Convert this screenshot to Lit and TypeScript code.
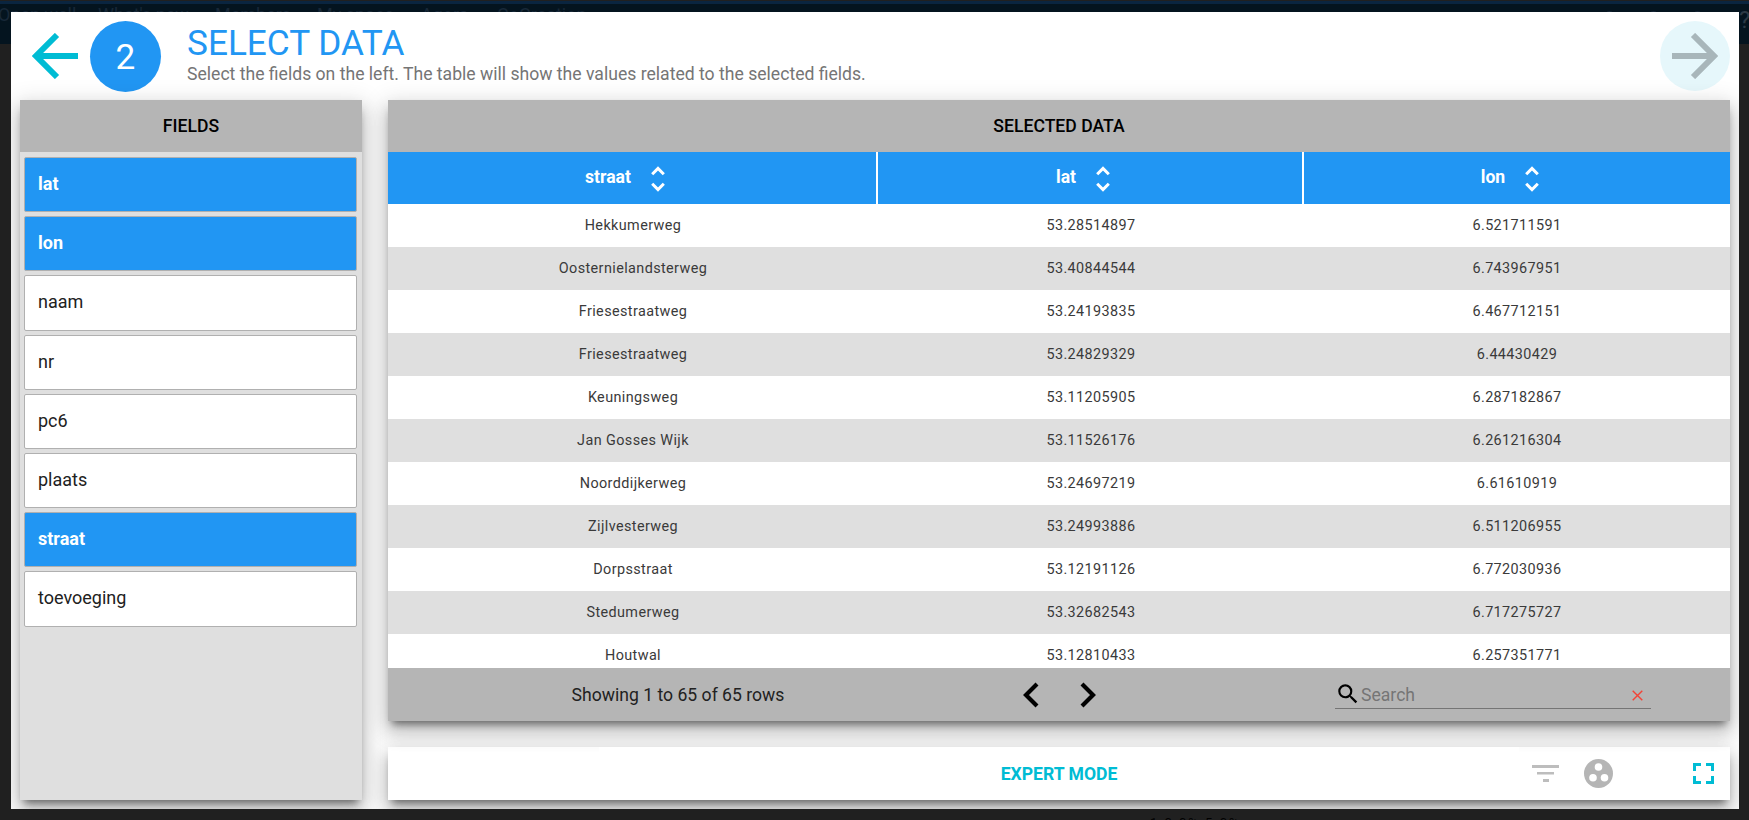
import { LitElement, html, css } from "lit";
import { customElement } from "lit/decorators.js";

const rows = [
  ["Hekkumerweg", "53.28514897", "6.521711591"],
  ["Oosternielandsterweg", "53.40844544", "6.743967951"],
  ["Friesestraatweg", "53.24193835", "6.467712151"],
  ["Friesestraatweg", "53.24829329", "6.44430429"],
  ["Keuningsweg", "53.11205905", "6.287182867"],
  ["Jan Gosses Wijk", "53.11526176", "6.261216304"],
  ["Noorddijkerweg", "53.24697219", "6.61610919"],
  ["Zijlvesterweg", "53.24993886", "6.511206955"],
  ["Dorpsstraat", "53.12191126", "6.772030936"],
  ["Stedumerweg", "53.32682543", "6.717275727"],
  ["Houtwal", "53.12810433", "6.257351771"],
];
const fields: [string, boolean][] = [
  ["lat", true], ["lon", true], ["naam", false], ["nr", false],
  ["pc6", false], ["plaats", false], ["straat", true], ["toevoeging", false],
];
const navItems = ["Open well", "What's new", "Members", "My space", "Agora", "CoCreation"];
const sortIcon = html`<svg class="sort" width="14" height="26" viewBox="0 0 14 26"><path d="M1.200 8.200 7 2.400 12.800 8.200M1.200 17.800 7 23.600 12.800 17.800" fill="none" stroke="#fff" stroke-width="3"/></svg>`;

@customElement("app-root")
export class AppRoot extends LitElement {
  static styles = css`
    :host { display: block; width: 1749px; height: 820px; overflow: hidden; background: #202020; font-family: Roboto, sans-serif; position: relative; }
    .topstrip { position: absolute; left: 0; right: 0; top: 1px; height: 43px; background: linear-gradient(#0a2540 3px, #04141f 3px); color: #182838; font-size: 18px; line-height: 21px; white-space: nowrap; display: flex; padding: 3px 0 0 0; box-sizing: border-box; }
    .nav { margin-left: -2px; display: flex; gap: 33px; }
    .nav span:nth-child(1) { width: 67px; }
    .nav span:nth-child(2) { width: 84px; }
    .nav span:nth-child(3) { width: 69px; }
    .nav span:nth-child(4) { width: 71px; }
    .nav span:nth-child(5) { width: 43px; }
    .dots { margin-left: auto; display: flex; gap: 33px; padding: 7px 0 0 0; align-items: flex-start; }
    .dots i { width: 11px; height: 11px; border-radius: 50%; background: #182838; display: block; }
    .help { color: #2c3a46; font-size: 24px; line-height: 28px; width: 10px; margin-left: 36px; overflow: hidden; padding-top: 2px; }
    .under { position: absolute; left: 1150px; top: 815px; color: #000; font-size: 13px; letter-spacing: 2px; white-space: nowrap; }
    .modal { position: absolute; left: 11px; top: 12px; width: 1728px; height: 797px; background: #fff; box-sizing: border-box; padding: 9px; display: flex; flex-direction: column; overflow: hidden; }
    .head { height: 79px; flex: none; display: flex; align-items: flex-start; }
    .back { margin: 12px 0 0 12px; width: 46px; height: 46px; flex: none; }
    .circle { width: 71px; height: 71px; border-radius: 50%; background: #2196f3; color: #fff; font-size: 35.2px; font-weight: 400; display: flex; align-items: center; justify-content: center; margin-left: 12px; flex: none; }
    .titles { margin-left: 26px; flex: 1; padding-top: 2px; }
    h1 { margin: 0; font-size: 35.2px; line-height: 41px; font-weight: 400; color: #2196f3; }
    .sub { font-size: 17.6px; line-height: 19px; color: #757575; margin-top: 1px; }
    .next { width: 70px; height: 70px; border-radius: 50%; background: #e6f7fb; display: flex; align-items: center; justify-content: center; flex: none; }
    .main { flex: 1; display: flex; gap: 26px; }
    .fields { width: 342px; background: #dfdfdf; box-shadow: 0 7px 8px -4px rgba(0,0,0,.5), 0 12px 17px 2px rgba(0,0,0,.14), 0 5px 22px 4px rgba(0,0,0,.12); display: flex; flex-direction: column; }
    .phead { height: 52px; flex: none; box-sizing: border-box; padding-bottom: 1px; background: #b5b5b5; color: #000; font-size: 17.6px; font-weight: 500; display: flex; align-items: center; justify-content: center; }
    .list { padding: 5px 5px 5px 4px; display: flex; flex-direction: column; gap: 4px; }
    .item { height: 55.2px; box-sizing: border-box; border: 1px solid #b0b0b0; border-radius: 2px; background: #fff; padding: 0 0 2px 13px; display: flex; align-items: center; font-size: 18px; color: #212121; }
    .item.on { background: #2196f3; color: #fff; font-weight: 700; }
    .right { flex: 1; display: flex; flex-direction: column; gap: 26px; }
    .table { height: 621px; flex: none; display: flex; flex-direction: column; position: relative; z-index: 1; box-shadow: 0 7px 8px -4px rgba(0,0,0,.5), 0 12px 17px 2px rgba(0,0,0,.14), 0 5px 22px 4px rgba(0,0,0,.12); background: #fff; }
    .cols { height: 52px; flex: none; display: grid; grid-template-columns: 490px 426px 1fr; background: #2196f3; }
    .col { display: flex; align-items: center; justify-content: center; gap: 20px; color: #fff; font-weight: 700; font-size: 17.6px; border-right: 2px solid #fff; padding-right: 14px; box-sizing: border-box; }
    .col:last-child { border: 0; }
    .col span { padding-bottom: 3px; }
    .sort { margin-top: 2px; }
    .rows { flex: 1; overflow: hidden; }
    .row { height: 43px; box-sizing: border-box; padding-bottom: 1px; display: grid; grid-template-columns: 490px 426px 1fr; font-size: 14.4px; letter-spacing: .4px; color: #3a3a3a; align-items: center; text-align: center; }
    .row:nth-child(even) { background: #dfdfdf; }
    .foot { height: 53px; flex: none; background: #b5b5b5; display: grid; grid-template-columns: 580px 185px 1fr; align-items: center; color: #212121; font-size: 17.6px; }
    .info { text-align: center; }
    .pager { display: flex; gap: 37px; justify-content: center; padding-right: 3px; }
    .search { margin-left: 182px; width: 316px; height: 28px; box-sizing: border-box; border-bottom: 1px solid #757575; display: flex; align-items: center; color: #757575; }
    .search span { flex: 1; padding-top: 1px; }
    .search .x { margin: 2px 8px 0 0; }
    .bar { flex: 1; background: #fff; position: relative; display: grid; grid-template-columns: 211px 920px 211px; box-shadow: 0 7px 8px -4px rgba(0,0,0,.5), 0 12px 17px 2px rgba(0,0,0,.14), 0 5px 22px 4px rgba(0,0,0,.12); }
    .center { position: relative; z-index: 2; background: #fff; display: flex; align-items: center; justify-content: center; color: #00bcd4; font-weight: 700; font-size: 17.6px; }
    .tools { display: flex; align-items: center; padding-left: 13px; position: relative; z-index: 2; }
    .c1 { margin-left: 25px; }
    .c2 { margin-left: 80px; }
  `;
  render() {
    return html`
      <div class="topstrip">
        <div class="nav">${navItems.map((n) => html`<span>${n}</span>`)}</div>
        <div class="dots"><i></i><i></i><i></i></div>
        <div class="help">?</div>
      </div>
      <div class="under">1 0 0% 5 0%</div>
      <div class="modal">
        <div class="head">
          <svg class="back" viewBox="0 0 46 46"><path d="M46 23H4M25 2 4 23 25 44" fill="none" stroke="#00bcd4" stroke-width="6"/></svg>
          <div class="circle">2</div>
          <div class="titles">
            <h1>SELECT DATA</h1>
            <div class="sub">Select the fields on the left. The table will show the values related to the selected fields.</div>
          </div>
          <div class="next"><svg width="46" height="46" viewBox="0 0 46 46"><path d="M0 23H42M21 2 42 23 21 44" fill="none" stroke="#a8b6ba" stroke-width="6"/></svg></div>
        </div>
        <div class="main">
          <div class="fields">
            <div class="phead">FIELDS</div>
            <div class="list">${fields.map(([n, on]) => html`<div class="item ${on ? "on" : ""}">${n}</div>`)}</div>
          </div>
          <div class="right">
            <div class="table">
              <div class="phead">SELECTED DATA</div>
              <div class="cols">
                <div class="col"><span>straat</span>${sortIcon}</div>
                <div class="col"><span>lat</span>${sortIcon}</div>
                <div class="col"><span>lon</span>${sortIcon}</div>
              </div>
              <div class="rows">${rows.map((r) => html`<div class="row"><div>${r[0]}</div><div>${r[1]}</div><div>${r[2]}</div></div>`)}</div>
              <div class="foot">
                <div class="info">Showing 1 to 65 of 65 rows</div>
                <div class="pager">
                  <svg width="20" height="28" viewBox="0 0 20 28"><path d="M16 3 5 14l11 11" fill="none" stroke="#000" stroke-width="4.200"/></svg>
                  <svg width="20" height="28" viewBox="0 0 20 28"><path d="M4 3l11 11L4 25" fill="none" stroke="#000" stroke-width="4.200"/></svg>
                </div>
                <div class="search">
                  <svg width="26" height="26" viewBox="0 0 24 24"><path d="M15.500 14h-.79l-.28-.27A6.470 6.470 0 0 0 16 9.500 6.500 6.500 0 1 0 9.500 16c1.610 0 3.090-.59 4.230-1.570l.27.280v.79l5 4.990L20.490 19l-4.990-5zm-6 0C7.010 14 5 11.990 5 9.500S7.010 5 9.500 5 14 7.010 14 9.500 11.990 14 9.500 14z"/></svg>
                  <span>Search</span>
                  <svg class="x" width="11" height="11" viewBox="0 0 11 11"><path d="M.7.700l9.600 9.600M10.300.700.700 10.300" stroke="#f44336" stroke-width="1.400"/></svg>
                </div>
              </div>
            </div>
            <div class="bar">
              <div></div>
              <div class="center">EXPERT MODE</div>
              <div class="tools">
                <svg width="27" height="18" viewBox="0 0 27 18"><path d="M0 0h27v3H0zM5 7h17v2.500H5zM11 14h6v3h-6z" fill="#bdbdbd"/></svg>
                <svg class="c1" width="29" height="29" viewBox="0 0 29 29"><circle cx="14.500" cy="14.500" r="14.500" fill="#b5b5b5"/><circle cx="14.500" cy="8" r="3.800" fill="#fff"/><circle cx="9" cy="18.700" r="3.800" fill="#fff"/><circle cx="20.500" cy="18.700" r="3.800" fill="#fff"/></svg>
                <svg class="c2" width="21" height="21" viewBox="0 0 21 21"><path d="M1.500 8V1.500H8M13 1.500h6.500V8M19.500 13v6.500H13M8 19.500H1.500V13" fill="none" stroke="#00bcd4" stroke-width="3"/></svg>
              </div>
            </div>
          </div>
        </div>
      </div>
    `;
  }
}
